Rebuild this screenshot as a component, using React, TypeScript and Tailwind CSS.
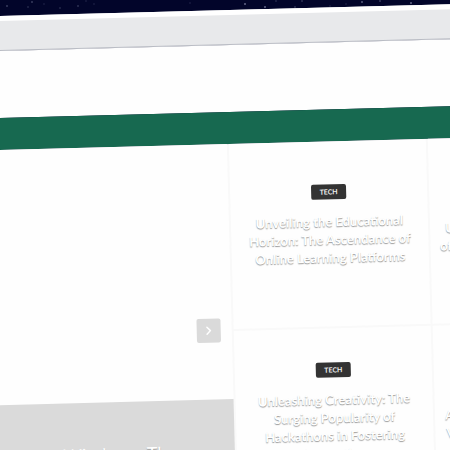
import { ChevronRight } from "lucide-react";

const stars = [
  [7, 6, 0.5], [32, 2, 0.5], [28, 7, 0.3], [44, 4, 0.2], [60, 8, 0.3], [78, 6, 0.4], [86, 1, 0.2],
  [94, 4, 0.2], [190, 3, 0.2], [245, 4, 0.9], [265, 7, 0.9], [276, 1, 0.3], [295, 7, 0.4], [302, 1, 0.4],
  [346, 4, 0.2], [362, 2, 0.8], [380, 1, 0.5], [411, 3, 0.9], [330, 6, 0.2],
];

type Story = { title: string[] };

const stories: Story[] = [
  { title: ["Unveiling the Educational", "Horizon: The Ascendance of", "Online Learning Platforms"] },
  { title: ["Unveiling the Future: Powers", "of Artificial Intelligence Among"] },
  { title: ["Unleashing Creativity: The", "Surging Popularity of", "Hackathons in Fostering", "Innovation"] },
  { title: ["Augmented Reality and Where", "Virtual Worlds Shape Learning"] },
];

function StoryCard({ title }: Story) {
  return (
    <article className="flex h-[185px] flex-col items-center justify-center gap-[13px] bg-[#fefefe] pb-[17px]">
      <a href="#tech" className="flex h-[15px] items-center rounded-[2px] bg-[#333] px-2 text-[7px] font-bold text-[#eee]">
        TECH
      </a>
      <h2 className="text-center text-[13px] leading-[18px] font-bold whitespace-nowrap text-white [text-shadow:0_1px_1px_#999]">
        {title.map((line) => (
          <span key={line} className="block">{line}</span>
        ))}
      </h2>
    </article>
  );
}

export default function App() {
  return (
    <main className="relative h-screen overflow-hidden bg-[#02052a] font-[Lato,sans-serif]">
      <svg className="absolute inset-x-0 top-0 h-4 w-full" aria-hidden="true">
        {stars.map(([x, y, o]) => (
          <circle key={`${x}-${y}`} cx={x} cy={y} r="0.7" fill="#dfe3ff" opacity={o} />
        ))}
      </svg>
      <div className="relative -ml-5 w-[calc(100%+60px)] origin-[20px_0] -rotate-[1.5deg] pt-4">
        <div className="h-[35px] border-t-[5px] border-b border-t-white border-b-[#b9bcc4] bg-[#e8e9eb]" />
        <header className="h-[67px] bg-[#fefefe]" />
        <nav className="h-8 bg-[#176950]" />
        <div className="flex gap-[2px] bg-[#f9f9f9]">
          <section className="flex h-[372px] w-[243px] shrink-0 flex-col bg-[#fefefe]">
            <div className="relative flex flex-1 flex-col justify-end">
              <button aria-label="Next story" className="absolute top-1/2 right-[11px] flex size-6 -translate-y-1/2 items-center justify-center rounded-[2px] bg-[#dadada] text-white">
                <ChevronRight size={14} strokeWidth={2.5} />
              </button>
              <div className="h-[117px] bg-[#dadada] pt-10 pr-[58px] text-right">
                <h1 className="text-[18px] leading-6 whitespace-nowrap text-white [text-shadow:0_1px_1px_#999]">Windows: The</h1>
              </div>
            </div>
          </section>
          <section className="grid shrink-0 grid-cols-[197px_197px] gap-[2px]">
            {stories.map((story) => (
              <StoryCard key={story.title[0]} {...story} />
            ))}
          </section>
        </div>
      </div>
    </main>
  );
}
